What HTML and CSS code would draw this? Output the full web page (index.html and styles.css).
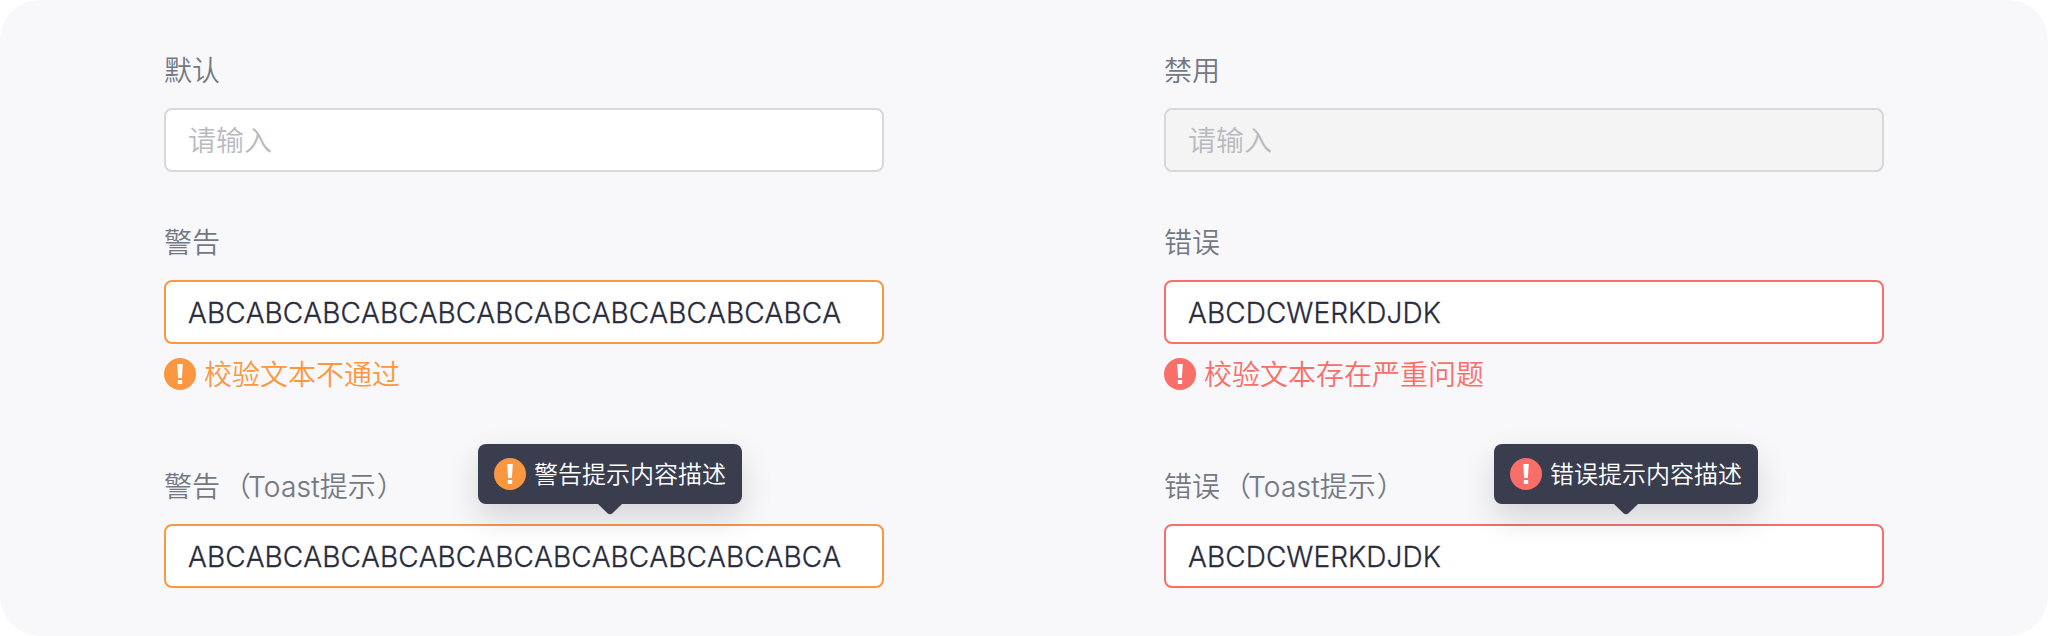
FILE: index.html
```html
<!DOCTYPE html>
<html lang="zh-CN">
<head>
<meta charset="utf-8">
<title>输入框</title>
<link rel="stylesheet" href="styles.css">
</head>
<body>
<svg width="0" height="0" class="sprite">
  <symbol id="alert" viewBox="0 0 32 32">
    <circle cx="16" cy="16" r="16" fill="currentColor"/>
    <path fill="#fff" d="M13.2 6h5.6l-.9 14h-3.8zM13.8 22h4.4v4h-4.4z"/>
  </symbol>
</svg>
<main class="panel">
  <section class="column">
    <div class="field">
      <label class="label">默认</label>
      <div class="input"><span class="placeholder">请输入</span></div>
    </div>
    <div class="field field-hinted warning">
      <label class="label">警告</label>
      <div class="input"><span class="value">ABCABCABCABCABCABCABCABCABCABCABCA</span></div>
      <div class="hint"><svg class="icon"><use href="#alert"/></svg><span>校验文本不通过</span></div>
    </div>
    <div class="field warning">
      <label class="label">警告<span class="paren-open">（</span><span class="latin">Toast</span>提示<span class="paren-close">）</span></label>
      <div class="input"><span class="value">ABCABCABCABCABCABCABCABCABCABCABCA</span></div>
      <div class="toast toast-warning"><svg class="icon"><use href="#alert"/></svg><span>警告提示内容描述</span><svg class="arrow" viewBox="0 0 24 11"><path d="M0 0h24l-9.8 9.6Q12 11 9.8 9.6z"/></svg></div>
    </div>
  </section>
  <section class="column">
    <div class="field">
      <label class="label">禁用</label>
      <div class="input disabled"><span class="placeholder">请输入</span></div>
    </div>
    <div class="field field-hinted error">
      <label class="label">错误</label>
      <div class="input"><span class="value">ABCDCWERKDJDK</span></div>
      <div class="hint"><svg class="icon"><use href="#alert"/></svg><span>校验文本存在严重问题</span></div>
    </div>
    <div class="field error">
      <label class="label">错误<span class="paren-open">（</span><span class="latin">Toast</span>提示<span class="paren-close">）</span></label>
      <div class="input"><span class="value">ABCDCWERKDJDK</span></div>
      <div class="toast toast-error"><svg class="icon"><use href="#alert"/></svg><span>错误提示内容描述</span><svg class="arrow" viewBox="0 0 24 11"><path d="M0 0h24l-9.8 9.6Q12 11 9.8 9.6z"/></svg></div>
    </div>
  </section>
</main>
</body>
</html>
```
FILE: styles.css
```css
* { box-sizing: border-box; }
body {
  margin: 0;
  background: #fff;
  font-family: "Noto Sans CJK SC", sans-serif;
  font-weight: 350;
  font-size: 28px;
}
.sprite { position: absolute; }
.panel {
  display: flex;
  gap: 280px;
  height: 636px;
  padding: 50px 164px 0;
  background: #f8f8fb;
  border-radius: 40px;
}
.column {
  display: flex;
  flex-direction: column;
  gap: 50px;
  width: 720px;
}
.field {
  position: relative;
  display: flex;
  flex-direction: column;
}
.field-hinted { margin-bottom: 22px; }
.label {
  height: 40px;
  margin-bottom: 18px;
  line-height: 38px;
  color: #747883;
  white-space: nowrap;
}
.latin {
  font-family: Inter, sans-serif;
  font-weight: 300;
  letter-spacing: .2px;
  -webkit-text-stroke: .25px currentColor;
}
.paren-open { margin: 0 -3px 0 3px; }
.paren-close { margin-left: 1px; }
.input {
  display: flex;
  align-items: center;
  height: 64px;
  padding: 0 22px;
  border: 2px solid #d8d8da;
  border-radius: 8px;
  background: #fff;
  line-height: 40px;
}
.value {
  padding-top: 2px;
  color: #272b3b;
  font-family: Inter, "Noto Sans CJK SC", sans-serif;
  font-weight: 300;
  font-kerning: none;
  letter-spacing: .08px;
  -webkit-text-stroke: .3px currentColor;
}
.placeholder {
  padding-bottom: 2px;
  color: #b9babf;
}
.disabled { background: #f4f4f4; }
.warning { color: #fb9740; }
.error { color: #f86e69; }
.warning .input { border-color: #fb9740; }
.error .input { border-color: #f86e69; }
.hint {
  display: flex;
  align-items: center;
  gap: 8px;
  height: 40px;
  margin-top: 10px;
  line-height: 38px;
}
.hint span { padding-bottom: 2px; }
.toast span { padding-bottom: 4px; }
.icon {
  flex: none;
  width: 32px;
  height: 32px;
}
.toast {
  position: absolute;
  top: -22px;
  display: flex;
  align-items: center;
  gap: 8px;
  width: 264px;
  height: 60px;
  padding: 0 16px;
  border-radius: 8px;
  background: #393d4d;
  box-shadow: 0 14px 32px rgba(0, 0, 0, .14);
  font-size: 24px;
  white-space: nowrap;
}
.toast span { color: #fff; }
.toast-warning { left: 314px; }
.toast-error { left: 330px; }
.arrow {
  position: absolute;
  top: 60px;
  left: 120px;
  width: 24px;
  height: 11px;
  fill: #393d4d;
}
```
